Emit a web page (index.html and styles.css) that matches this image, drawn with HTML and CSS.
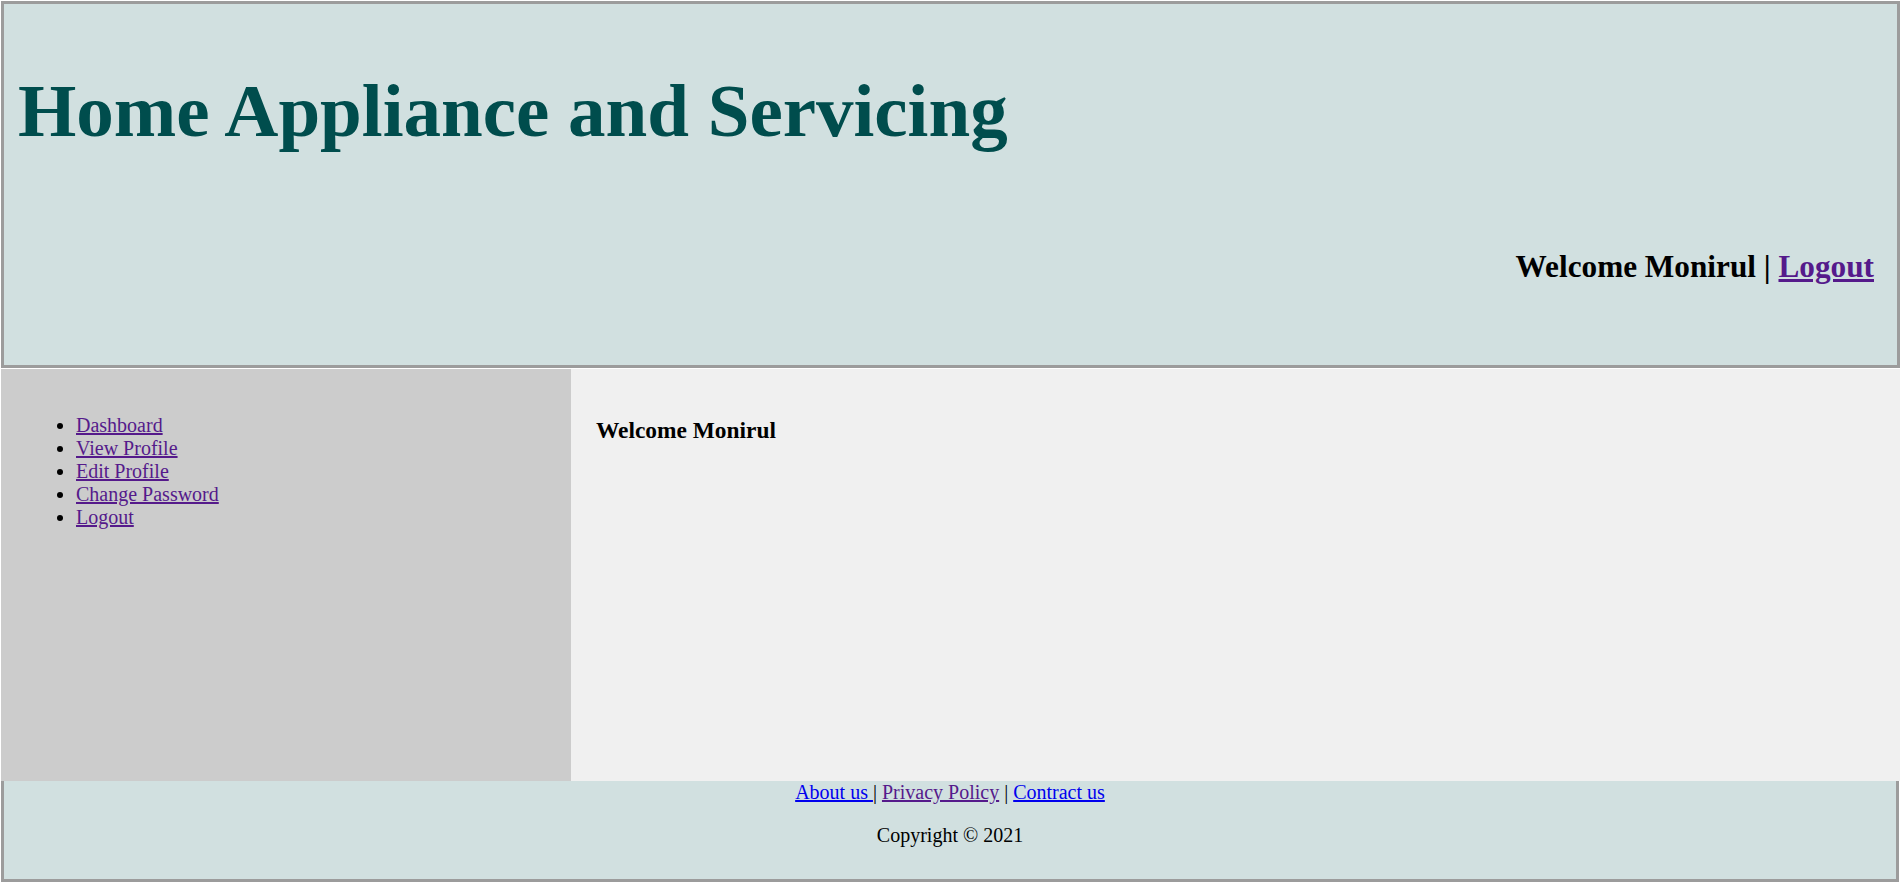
FILE: index.html
```html
<!DOCTYPE html>
<html lang="en">
<head>
<meta charset="utf-8">
<title>Home Appliance and Servicing</title>
<link rel="stylesheet" href="styles.css">
</head>
<body>
<header class="header">
  <h1 class="site-title">Home Appliance and Servicing</h1>
  <div class="user-bar">Welcome Monirul | <a href="#" class="visited">Logout</a></div>
</header>
<div class="middle">
  <nav class="sidebar">
    <ul class="nav-list">
      <li><a href="#" class="visited">Dashboard</a></li>
      <li><a href="#" class="visited">View Profile</a></li>
      <li><a href="#" class="visited">Edit Profile</a></li>
      <li><a href="#" class="visited">Change Password</a></li>
      <li><a href="#" class="visited">Logout</a></li>
    </ul>
  </nav>
  <main class="content">
    <h3 class="welcome">Welcome Monirul</h3>
  </main>
</div>
<footer class="footer">
  <div class="footer-links"><a href="#" class="link">About us </a>| <a href="#" class="visited">Privacy Policy</a> | <a href="#" class="link">Contract us</a></div>
  <p class="copyright">Copyright © 2021</p>
</footer>
</body>
</html>
```

FILE: styles.css
```css
html, body {
  margin: 0;
  background: #ffffff;
}
body {
  padding: 1px 0 0 1px;
  font-family: "Liberation Serif", "Times New Roman", serif;
  font-size: 20px;
  color: #000;
}
a.visited { color: #551a8b; }
a.link { color: #0000ee; }

.header {
  box-sizing: border-box;
  height: 367px;
  background: #d1e0e0;
  border: 3px solid #9c9c9c;
  padding: 0 23px 0 14px;
}
.site-title {
  margin: 64px 0 0;
  font-size: 75px;
  font-weight: bold;
  color: #004d4d;
  line-height: normal;
}
.user-bar {
  margin-top: 95px;
  text-align: right;
  font-size: 31.25px;
  font-weight: bold;
}

.middle {
  display: flex;
  height: 412px;
  margin-top: 1px;
}
.sidebar {
  box-sizing: border-box;
  width: 570px;
  background: #cccccc;
  padding: 25px;
}
.nav-list {
  margin: 20px 0;
  padding-left: 50px;
}
.content {
  flex: 1;
  background: #f0f0f0;
  padding: 25px;
}
.welcome {
  margin: 23.4px 0;
  font-size: 23.4px;
  font-weight: bold;
}

.footer {
  box-sizing: border-box;
  height: 101px;
  margin-right: 1px;
  background: #d1e0e0;
  border: 3px solid #9c9c9c;
  border-top: none;
  text-align: center;
}
.copyright {
  margin: 20px 0;
}
```
